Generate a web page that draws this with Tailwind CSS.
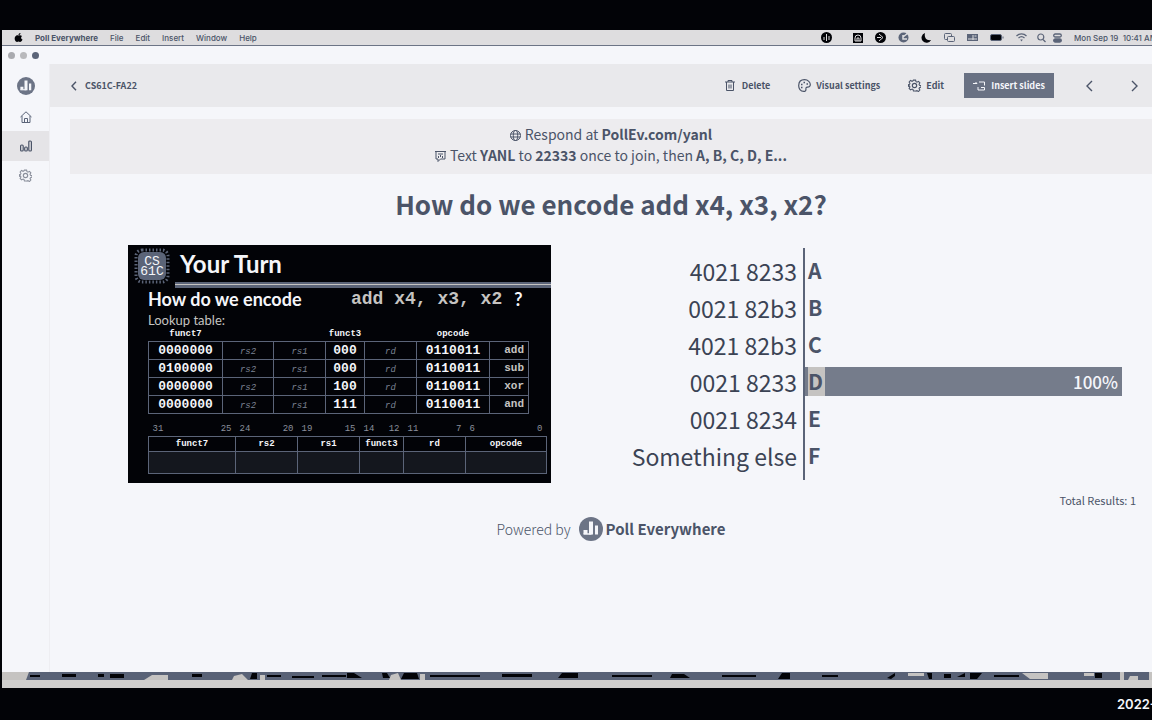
<!DOCTYPE html>
<html lang="en">
<head>
<meta charset="utf-8">
<title>Poll Everywhere</title>
<script src="https://cdn.jsdelivr.net/npm/@tailwindcss/browser@4"></script>
</head>
<body class="flex min-h-screen flex-col overflow-x-hidden bg-[#020307] pt-[30px] font-['Noto_Sans_CJK_SC',sans-serif] text-[#4b5468]">

<!-- Shared symbols -->
<svg class="hidden">
  <symbol id="logo" viewBox="0 0 24 24">
    <circle cx="12" cy="12" r="12" fill="#6c7486"/>
    <path d="M4.500 13h4v4h-4zM10 4.500h4v13h-4zM16 8.500h3v9h-3z" fill="#f5f6fa"/>
    <path d="M4.500 17h8" stroke="#f5f6fa" stroke-width="1.500"/>
  </symbol>
  <symbol id="gear" viewBox="0 0 24 24" fill="none" stroke="currentColor">
    <path d="M10 2h4l.8 3 1.700.8 2.800-1.500 2.600 2.800-1.500 2.700.8 1.700 2.800.7v3l-2.800.7-.8 1.700 1.500 2.700-2.600 2.800-2.800-1.500-1.700.7L14 22h-4l-.8-2.700-1.700-.7-2.800 1.500-2.600-2.800 1.500-2.700-.8-1.700L1 13.500v-3l1.800-.6.8-1.700-1.500-2.700 2.600-2.800 2.800 1.500 1.700-.8z" stroke-width="2"/>
    <circle cx="12" cy="12" r="4" stroke-width="2.200"/>
  </symbol>
</svg>

<div class="ml-[2px] flex flex-1 flex-col bg-[#f5f6fa]">

  <!-- System menu bar -->
  <header class="flex h-4 items-center overflow-hidden border-b border-[#6c7486] bg-[#dedddf] pl-3 font-[Inter,sans-serif] text-[8px] leading-none">
    <svg class="mr-3 h-[9px] w-[9px]" viewBox="0 0 18 18" fill="#020307"><path d="M9 5c2-1 5-1 7 1-3 2-2 6 1 7-1 3-3 5-5 5-1 0-2-1-3-1s-2 1-3 1C3 18 0 12 2 8c2-4 5-4 7-3zM9 4c0-2 1-4 4-4 0 3-2 4-4 4z"/></svg>
    <nav class="flex gap-3 font-medium">
      <span class="font-bold">Poll Everywhere</span><span>File</span><span>Edit</span><span>Insert</span><span>Window</span><span>Help</span>
    </nav>
    <div class="ml-auto flex items-center gap-3">
      <svg class="mr-2 h-[11px] w-[11px]" viewBox="0 0 11 11"><circle cx="5.500" cy="5.500" r="5.500" fill="#020307"/><path d="M3 5v3M5.500 2v7M8 4v4" stroke="#dedddf"/></svg>
      <svg class="h-[11px] w-[11px]" viewBox="0 0 11 11"><path d="M1 1h10v10H1z" fill="#020307"/><path d="M3 9V6a3 3 0 0 1 6 0v3zM5 9V6h2v3" fill="none" stroke="#dedddf"/></svg>
      <svg class="h-[11px] w-[11px]" viewBox="0 0 11 11"><circle cx="5.500" cy="5.500" r="5.500" fill="#020307"/><path d="M4 2l4 3.500L4 9M2 5.500h4" fill="none" stroke="#dedddf"/></svg>
      <svg class="h-[11px] w-[11px]" viewBox="0 0 11 11"><circle cx="5.500" cy="5.500" r="5" fill="#5b6478"/><path d="M5 5l5-4M5 3v4h4" fill="none" stroke="#dedddf" stroke-width="1.500"/></svg>
      <svg class="h-[11px] w-[11px]" viewBox="0 0 11 11"><path d="M4 1a5 5 0 1 0 6 7C5 9 3 5 4 1z" fill="#020307"/></svg>
      <svg class="h-[11px] w-[11px]" viewBox="0 0 11 11" fill="none" stroke="#5b6478"><rect x=".5" y="1.500" width="7" height="6" rx="1"/><rect x="3.500" y="4.500" width="7" height="5" rx="1" fill="#dedddf"/></svg>
      <svg class="h-[11px] w-[11px]" viewBox="0 0 11 11"><path d="M0 2h11v7H0z" fill="#5b6478"/><path d="M6 3v5M1 7h9M7.500 4h2" stroke="#dedddf"/></svg>
      <svg class="h-[11px] w-[14px]" viewBox="0 0 14 11"><rect x=".5" y="2.500" width="11" height="6" rx="1.500" fill="#020307" stroke="#5b6478"/><path d="M13 4.500v2" stroke="#5b6478"/></svg>
      <svg class="h-[11px] w-[11px]" viewBox="0 0 11 11" fill="none" stroke="#5b6478"><path d="M.5 4a7 7 0 0 1 10 0M2.500 6a4.500 4.500 0 0 1 6 0" stroke-width="1.300"/><path d="M4.200 7.500h2.600L5.500 9.500z" fill="#5b6478" stroke="none"/></svg>
      <svg class="-ml-[2px] h-[10px] w-[9px]" viewBox="0 0 9 10" fill="none" stroke="#5b6478" stroke-width="1.200"><circle cx="3.800" cy="4" r="3"/><path d="M6 6.500L8.500 9"/></svg>
      <svg class="-ml-[5px] h-[10px] w-[9px]" viewBox="0 0 9 10" fill="none" stroke="#5b6478" stroke-width="1.300"><rect x=".7" y="1" width="7.600" height="3" rx="1.500"/><rect x=".7" y="6" width="7.600" height="3" rx="1.500" fill="#5b6478"/></svg>
      <span class="w-[78px] overflow-hidden font-medium whitespace-nowrap">Mon Sep 19&nbsp; 10:41 AM</span>
    </div>
  </header>

  <!-- Window controls -->
  <div class="flex h-[18px] items-center gap-[5px] pl-[6px]">
    <span class="h-[7px] w-[7px] rounded-full bg-[#a9aaaf]"></span>
    <span class="h-[7px] w-[7px] rounded-full bg-[#b9b9bc]"></span>
    <span class="h-[7px] w-[7px] rounded-full bg-[#5b6478]"></span>
  </div>

  <div class="flex flex-1">
    <!-- Sidebar -->
    <nav class="flex w-12 shrink-0 flex-col items-center border-r border-[#eeeef2] pt-[13px]">
      <a href="#" aria-label="Poll Everywhere"><svg class="h-[18px] w-[18px]"><use href="#logo"/></svg></a>
      <a href="#" aria-label="Home" class="mt-2 flex h-7 w-full items-center justify-center">
        <svg class="h-3 w-3" viewBox="0 0 12 12" fill="none" stroke="#5b6478"><path d="M.5 6L6 .8 11.500 6M2 5v6.500h8V5M4.500 11V7.500h3V11"/></svg>
      </a>
      <a href="#" aria-label="Activities" class="flex h-[30px] w-full items-center justify-center bg-[#e5e4e7]">
        <svg class="h-3 w-3" viewBox="0 0 12 12" fill="none" stroke="#4b5468" stroke-width="1.200"><rect x=".6" y="5" width="2.600" height="6" rx="1"/><rect x="4.700" y="7" width="2.600" height="4" rx="1"/><rect x="8.800" y="1" width="2.600" height="10" rx="1"/></svg>
      </a>
      <a href="#" aria-label="Settings" class="flex h-7 w-full items-center justify-center text-[#8b909c]"><svg class="h-[13px] w-[13px]"><use href="#gear"/></svg></a>
    </nav>

    <main class="min-w-0 flex-1">
      <!-- Toolbar -->
      <div class="flex h-[43px] items-center bg-[#e9e9ec] pr-[14px] pl-[21px] text-[9px] leading-none font-bold">
        <a href="#" class="flex items-center gap-2 font-bold">
          <svg class="h-[10px] w-[6px]" viewBox="0 0 6 10" fill="none" stroke="currentColor" stroke-width="1.400"><path d="M5 .8L1 5l4 4.200"/></svg>
          CS61C-FA22
        </a>
        <div class="ml-auto flex items-center">
          <button class="flex items-center gap-[7px]">
            <svg class="h-[11px] w-[10px]" viewBox="0 0 10 11" fill="none" stroke="currentColor"><path d="M0 2h10M3 2V.5h4V2M1.500 2v8.500h7V2M4 4.500v4M6 4.500v4"/></svg>Delete</button>
          <button class="ml-7 flex items-center gap-[5px]">
            <svg class="h-[13px] w-[13px]" viewBox="0 0 13 13" fill="none" stroke="currentColor" stroke-width="1.200"><path d="M7 12.300C2 13 .6 9 .7 6.500.8 3 3 .7 6.500.7s6 2.600 5.800 5.300C12 8.500 10 8 8.500 8.300 7 9 9 11.500 7 12.300z"/><path d="M3 5.500h1.500M5.500 3.500H7M8.500 5H10M3 8.500h1.500" stroke-width="1.500"/></svg>Visual settings</button>
          <button class="ml-7 flex items-center gap-[5px]"><svg class="h-[13px] w-[13px]"><use href="#gear"/></svg>Edit</button>
          <button class="ml-5 flex h-[25px] w-[90px] items-center justify-center gap-[6px] bg-[#697183] text-[#f5f6fa]">
            <svg class="h-[10px] w-[12px]" viewBox="0 0 12 10" fill="none" stroke="currentColor"><path d="M0 2.500h4M2.500 1L4 2.500M6 1h5.500v3.500M5 6v3h6.500V6.500H8"/></svg>Insert slides</button>
          <button aria-label="Previous" class="ml-8"><svg class="h-3 w-[7px]" viewBox="0 0 7 12" fill="none" stroke="currentColor" stroke-width="1.400"><path d="M6 1L1 6l5 5"/></svg></button>
          <button aria-label="Next" class="ml-[38px]"><svg class="h-3 w-[7px]" viewBox="0 0 7 12" fill="none" stroke="currentColor" stroke-width="1.400"><path d="M1 1l5 5-5 5"/></svg></button>
        </div>
      </div>

      <div class="pl-5">
        <!-- Join instructions -->
        <section class="mt-3 h-[55px] bg-[#edecef] pt-[5px] text-center text-[14px] leading-[21px]">
          <p class="flex items-center justify-center gap-1">
            <svg class="mt-[2px] h-[11px] w-[11px]" viewBox="0 0 11 11" fill="none" stroke="currentColor"><circle cx="5.500" cy="5.500" r="5"/><ellipse cx="5.500" cy="5.500" rx="2.200" ry="5"/><path d="M.5 4h10M.5 7h10"/></svg>
            <span>Respond at <b>PollEv.com/yanl</b></span>
          </p>
          <p class="flex items-center justify-center gap-1">
            <svg class="mt-[2px] h-[11px] w-[11px]" viewBox="0 0 11 11" fill="none" stroke="currentColor"><path d="M0 .5h11M1 .5v7.500h2v2.500L5.500 8H10V.5M3 3h5M3.500 5v2M7.500 5v2M5.500 4v2"/></svg>
            <span>Text <b>YANL</b> to <b>22333</b> once to join, then <b>A, B, C, D, E...</b></span>
          </p>
        </section>

        <h1 class="mt-[11px] text-center text-[26px] leading-[38px] font-bold">How do we encode add x4, x3, x2?</h1>

        <section class="mt-[22px] grid grid-cols-[423px_254px_1fr] pr-[30px] pl-[58px]">
          <!-- Lecture slide -->
          <figure class="h-[238px] overflow-hidden bg-[#020307] font-[Lato,sans-serif] text-[#f5f6fa]">
            <div class="flex h-[37px] items-center pl-[6px]">
              <svg class="mt-1 h-[36px] w-[36px]" viewBox="0 0 36 36"><rect x="2" y="2" width="32" height="32" rx="6" fill="none" stroke="#5b6478" stroke-width="3" stroke-dasharray="1.500 2"/><rect x="4" y="4" width="28" height="28" rx="6" fill="#5b6478"/><g fill="#f5f6fa" font-family="Liberation Mono, monospace" font-size="13" text-anchor="middle"><text x="18" y="17">CS</text><text x="18" y="27">61C</text></g></svg>
              <span class="ml-[10px] text-[24px] leading-none font-bold">Your Turn</span>
            </div>
            <div class="ml-[47px] h-[6px] border-t-2 border-b-3 border-[#5b6478] bg-[#c5c3c1]"></div>
            <div class="mt-px flex h-[19px] items-center pl-5 text-[18px] leading-none font-bold">
              <span class="w-[203px]">How do we encode</span>
              <code class="font-['Liberation_Mono',monospace] text-[18px] text-[#c5c3c1]">add x4, x3, x2</code>
              <span class="ml-3">?</span>
            </div>
            <p class="mt-[5px] pl-5 text-[13px] leading-[15px] text-[#c5c3c1]">Lookup table:</p>
            <table class="ml-5 w-[381px] table-fixed border-collapse text-center font-['Liberation_Mono',monospace] text-[13px] leading-[17px] font-bold">
              <colgroup><col class="w-[74px]"><col class="w-[51px]"><col class="w-[52px]"><col class="w-[39px]"><col class="w-[52px]"><col class="w-[73px]"><col class="w-[39px]"></colgroup>
              <thead class="text-[9px] leading-[13px]"><tr><th>funct7</th><th></th><th></th><th>funct3</th><th></th><th>opcode</th><th></th></tr></thead>
              <tbody class="[&_i]:text-[9px] [&_i]:font-normal [&_i]:text-[#7a8192] [&_td]:h-[18px] [&_td]:border [&_td]:border-[#5b6478] [&_td]:p-0 [&_td]:leading-none [&_td:last-child]:pr-1 [&_td:last-child]:text-right [&_td:last-child]:text-[11px] [&_td:last-child]:text-[#c5c3c1]">
                <tr><td>0000000</td><td><i>rs2</i></td><td><i>rs1</i></td><td>000</td><td><i>rd</i></td><td>0110011</td><td>add</td></tr>
                <tr><td>0100000</td><td><i>rs2</i></td><td><i>rs1</i></td><td>000</td><td><i>rd</i></td><td>0110011</td><td>sub</td></tr>
                <tr><td>0000000</td><td><i>rs2</i></td><td><i>rs1</i></td><td>100</td><td><i>rd</i></td><td>0110011</td><td>xor</td></tr>
                <tr><td>0000000</td><td><i>rs2</i></td><td><i>rs1</i></td><td>111</td><td><i>rd</i></td><td>0110011</td><td>and</td></tr>
              </tbody>
            </table>
            <table class="mt-2 ml-5 w-[398px] table-fixed border-collapse text-center font-['Liberation_Mono',monospace] text-[9px] leading-none">
              <colgroup><col class="w-[87px]"><col class="w-[62px]"><col class="w-[62px]"><col class="w-[44px]"><col class="w-[62px]"><col class="w-[81px]"></colgroup>
              <thead class="text-[#8b909c] [&_div]:flex [&_div]:h-[14px] [&_div]:items-center [&_div]:justify-between [&_div]:px-1">
                <tr><td><div><span>31</span><span>25</span></div></td><td><div><span>24</span><span>20</span></div></td><td><div><span>19</span><span>15</span></div></td><td><div><span>14</span><span>12</span></div></td><td><div><span>11</span><span>7</span></div></td><td><div><span>6</span><span>0</span></div></td></tr>
              </thead>
              <tbody class="font-bold [&_td]:border [&_td]:border-[#5b6478] [&_td]:p-0">
                <tr class="h-[15px]"><td>funct7</td><td>rs2</td><td>rs1</td><td>funct3</td><td>rd</td><td>opcode</td></tr>
                <tr class="h-[22px] bg-[#14171e]"><td></td><td></td><td></td><td></td><td></td><td></td></tr>
              </tbody>
            </table>
          </figure>

          <!-- Answer labels -->
          <ol class="mt-[3px] mb-[3px] border-r-2 border-[#5b6478] py-[5px] pr-[6px] text-right text-[23px] leading-[37px] text-[#3b4354]">
            <li>4021 8233</li><li>0021 82b3</li><li>4021 82b3</li><li>0021 8233</li><li>0021 8234</li><li>Something else</li>
          </ol>
          <!-- Result bars -->
          <ol class="mt-[2px] mb-[4px] py-[5px] text-[21px] leading-[37px] font-bold [&>li]:h-[37px] [&>li]:pl-[3px]">
            <li>A</li><li>B</li><li>C</li>
            <li class="flex items-center"><div class="-ml-[3px] flex h-[29px] flex-1 items-center bg-[#757c8b] pr-1 pl-[3px] leading-[29px]"><span class="w-[17px] bg-[#c5c3c1]">D</span><span class="ml-auto text-[17px] font-medium text-[#f5f6fa]">100%</span></div></li>
            <li>E</li><li>F</li>
          </ol>
        </section>

        <p class="mt-[7px] pr-4 text-right text-[11px] leading-5">Total Results: 1</p>

        <p class="mt-[7px] flex items-center justify-center text-[14px] leading-6">
          <span class="font-light">Powered by</span>
          <svg class="mr-[3px] ml-2 h-6 w-6"><use href="#logo"/></svg>
          <b class="text-[15px]">Poll Everywhere</b>
        </p>
      </div>
    </main>
  </div>

  <!-- Desktop showing beneath the window -->
  <svg class="h-2 w-full bg-[#596276]" viewBox="0 0 1150 8" preserveAspectRatio="none">
    <path d="M0 0h27l-3 8H0zM150 3h16v5h-24zM232 4l8-2 6 6h-16zM258 3h5v5h-5zM389 3l7-2 3 7h-12zM418 2h5v6h-5zM906 1h16v3h-16zM1020 1h26v6h-18zM1082 1h10v3h-10zM1118 0h4v8h-4zM1128 4h8v4h-10zM1147 0h3v8h-3z" fill="#c5c3c1"/>
    <path d="M28 3h10v2H28zM60 2h14v3H60zM96 2h6v3h-6zM108 2h14v4h-14zM190 2h10v3h-10zM250 1h5v6h-7zM265 3h14v2h-14zM290 4h22v2h-22zM320 3h24v2h-24zM345 1h7l8 5h-15zM380 1h5l3 5h-7zM402 1h13l2 6h-18zM428 3h50v2h-50zM500 2h30v3h-30zM560 1h16v5h-20zM610 3h40v2h-40zM670 2h12l6 4h-20zM720 3h34v2h-34zM780 1h8v6h-12zM820 3h16v2h-16zM885 6l8-5v3l-4 3zM925 1h5v6h-3zM942 2h7v4h-7zM955 5l8-4v4zM968 1h12l-5 6h-7zM992 3h25v2h-25zM1093 1h7v5h-7z" fill="#020307"/>
  </svg>
  <div class="h-2 bg-[#cfcecd]"></div>
</div>

<footer class="flex h-8 items-center justify-end overflow-hidden bg-[#020307] font-[Inter,sans-serif] text-[13px] leading-none font-semibold text-[#f5f6fa]">
  <span class="w-[35px] overflow-hidden whitespace-nowrap">2022-09-19</span>
</footer>
</body>
</html>
